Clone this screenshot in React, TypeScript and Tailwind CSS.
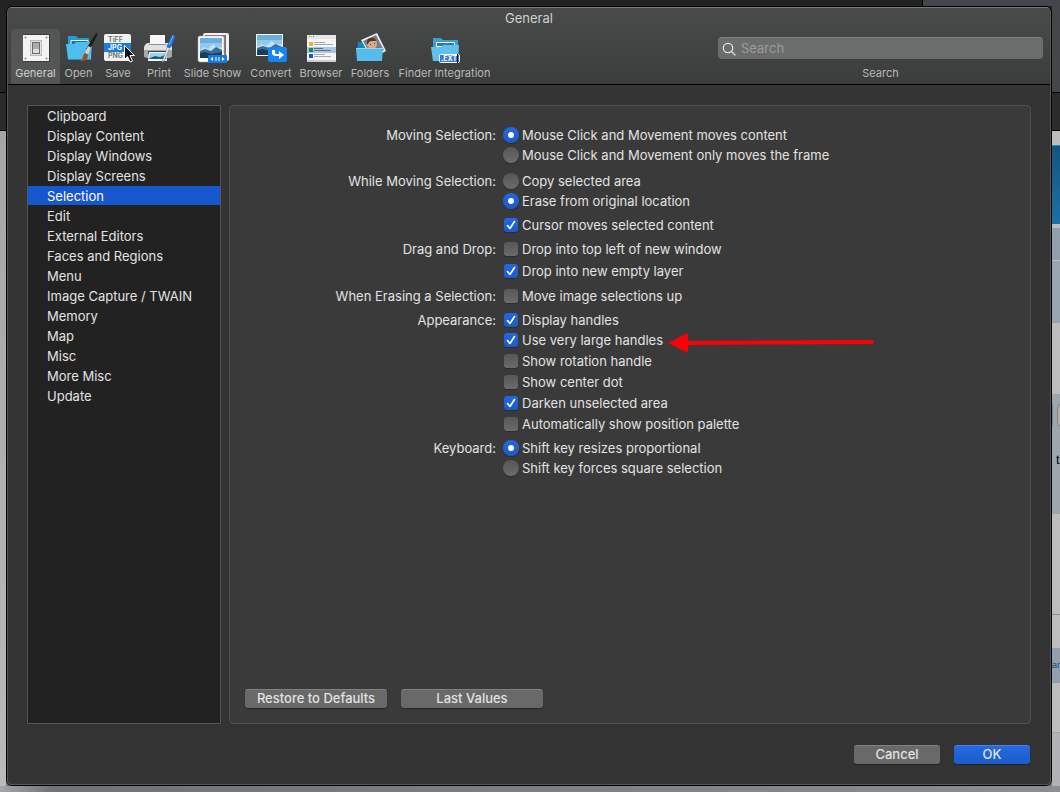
import type { ReactNode } from 'react'

const categories = [
  'Clipboard', 'Display Content', 'Display Windows', 'Display Screens', 'Selection',
  'Edit', 'External Editors', 'Faces and Regions', 'Menu', 'Image Capture / TWAIN',
  'Memory', 'Map', 'Misc', 'More Misc', 'Update',
]

function Svg({ children }: { children: ReactNode }) {
  return <svg width="32" height="32" viewBox="0 0 32 32" className="overflow-visible" aria-hidden="true">{children}</svg>
}

function GeneralIcon() {
  return (
    <Svg>
      <rect x="3" y="2" width="27" height="28" fill="#3a3a3a" />
      <rect x="3" y="3" width="26" height="26" fill="#f3f3f3" />
      <g fill="#888">
        <circle cx="5.5" cy="5.5" r="1" /><circle cx="26.5" cy="5.5" r="1" />
        <circle cx="5.5" cy="26.5" r="1" /><circle cx="26.5" cy="26.5" r="1" />
      </g>
      <rect x="10.5" y="8.500" width="11" height="15" fill="#e2e2e2" stroke="#bbb" />
      <rect x="12.500" y="10.500" width="7" height="11" fill="#d0d0d0" stroke="#6c6c6c" />
      <rect x="13" y="11" width="6" height="6" fill="#a9abad" />
      <rect x="13" y="17" width="6" height="4" fill="#dedede" />
    </Svg>
  )
}

function OpenIcon() {
  return (
    <Svg>
      <path d="M5 4h8l2 2h11v20H5z" fill="#239bd1" />
      <path d="M8 8.500h17v5H8z" fill="#1b6fb5" stroke="#e8f5ff" strokeWidth="1" />
      <path d="M3 12h8l2-2h16l-1 17a1 1 0 0 1-1 1H6a1 1 0 0 1-1-1z" fill="#4fbdee" />
      <path d="M5 27h22v1H5z" fill="#238fc4" />
      <path d="M33 1q2 0 1 3l-8 15-3-2z" fill="#1c1c1c" />
      <path d="m25 14 3 1.500-3 7-3-1.500z" fill="#cfd4d8" />
      <path d="m22 21 3 1.500q0 7-8 7 3-2 3-5 0-2 2-3.500z" fill="#a44b1e" />
    </Svg>
  )
}

function SaveIcon() {
  return (
    <Svg>
      <rect x="2" y="2" width="27" height="27" rx="2" fill="#f1f1f1" />
      <rect x="2" y="11" width="27" height="9" fill="#1c7ce0" />
      <g fontFamily="Inter, sans-serif" fontSize="7" fontWeight="700">
        <text x="6" y="10" fill="#7b7b7b">TiFF</text>
        <text x="6" y="18" fill="#fff">JPG</text>
        <text x="6" y="26" fill="#7b7b7b">PNG</text>
      </g>
      {/* mouse pointer */}
      <path d="M22.500 13.500v14l3-3 2.500 5.500 2.500-1-2.500-5.500h4.500z" fill="#111" stroke="#fff" />
    </Svg>
  )
}

function PrintIcon() {
  return (
    <Svg>
      <path d="M1 16q0-4 4-5h20q4 1 4 5v9l-3 1H4l-3-1z" fill="#a4a8ac" />
      <path d="M5 11h20q3 1 4 5v2H1v-2q1-4 4-5z" fill="#dfe1e3" />
      <path d="M7 3h15v9H7z" fill="#f7f7f7" />
      <path d="M6 12h17v1H6z" fill="#8e9194" />
      <path d="M5 19h19v3H5z" fill="#3b4044" />
      <path d="M6 20h17l1 9H5z" fill="#f5f5f5" />
      <path d="M7 21h15l1 6H6z" fill="#9bd3f0" />
      <path d="m7 26 5-2 5 1 5-2 1 4H6z" fill="#1e5c86" />
      <path d="m25 14-5 13-1 3 2-1 6-14z" fill="#e8edf0" stroke="#777" strokeWidth=".5" />
      <path d="M29 3q4-1 3 3l-4 9q-2 2-4 0-1-2 1-3z" fill="#1f74d8" />
      <path d="m30 4-4 9" stroke="#71b4fb" />
    </Svg>
  )
}

// mountain photo used by several icons
function Photo() {
  return (
    <>
      <path d="M0 0h22v20H0z" fill="#91c8ec" />
      <path d="M0 0h22v5H0z" fill="#6bafe0" />
      <path d="M0 12 4 9l4 2 5-5 4 4 5-1v6H0z" fill="#c9dfec" />
      <path d="m0 13 5-2 6 2 5-4 6 3v8H0z" fill="#3a6f94" />
      <path d="m0 15 5-1 6 2 11-2v6H0z" fill="#173e5c" />
    </>
  )
}

function SlideShowIcon() {
  return (
    <Svg>
      <rect x="6" y="1" width="26" height="28" rx="2" fill="#f1f1f1" />
      <path d="M8 3h21v23H8z" fill="#876a77" />
      <rect x="1" y="4" width="26" height="26" rx="2" fill="#f9f9f9" stroke="#aaa" strokeWidth=".5" />
      <g transform="translate(3 6)"><Photo /></g>
      <rect x="11" y="23" width="19" height="8" rx="1" fill="#1679e8" />
      <path d="m16 25-2.500 2 2.500 2zM25 25l2.500 2-2.500 2zM18.500 25h1v4h-1zM21.500 25h1v4h-1z" fill="#fff" />
    </Svg>
  )
}

function ConvertIcon() {
  return (
    <Svg>
      <path d="M1 2h27v22H1z" fill="#f6f6f6" />
      <g transform="translate(2 3) scale(1.14 1)"><Photo /></g>
      <rect x="13" y="15" width="19" height="15" rx="2" fill="#1685f4" />
      <path d="M17 18h3v3q0 1 2 1h2v-3l5 4-5 4v-3h-3q-4 0-4-3z" fill="#fff" />
    </Svg>
  )
}

function BrowserIcon() {
  return (
    <Svg>
      <path d="M2 3h29v27H2z" fill="#f5f5f5" />
      <path d="M2 3h29v4H2z" fill="#e5e5e5" />
      <path d="M4 4h1v1H4z" fill="#ed5b50" /><path d="M6 4h1v1H6z" fill="#d7b33c" /><path d="M8 4h1v1H8z" fill="#339c45" />
      <path d="M2 15h29v6H2z" fill="#abc6e0" />
      <path d="M4 10h4v4H4z" fill="#f0ac3c" />
      <path d="M4 16h4v4H4z" fill="#158759" />
      <path d="M4 22h4v4H4z" fill="#1c57bd" />
      <path d="M9 10h11v1H9zM9 12h19v1H9zM9 22h11v1H9zM9 24h17v1H9z" fill="#aaa" />
      <path d="M9 16h9v1H9zM9 18h17v1H9z" fill="#597185" />
      <path d="M2 28h29v2H2z" fill="#ccc" />
    </Svg>
  )
}

function FoldersIcon() {
  return (
    <Svg>
      <path d="M4 10h4l2 3h15v6H3z" fill="#1685b8" />
      <path d="m7 8 16-7 9 18-14 8z" fill="#f2f2f2" />
      <path d="m9 9 13-6 8 15-12 7z" fill="#73808a" />
      <circle cx="18" cy="12" r="5" fill="#dba98a" />
      <path d="M13 12q-1-6 4-6 4-1 5 3l-4 0q-3 0-4 3z" fill="#5a3424" />
      <path d="M16 12.500h1m3-1h1" stroke="#543" />
      <path d="M2 16h27l-1 13H3z" fill="#55bceb" />
      <path d="M2 16h27v1H2z" fill="#8ddafb" />
    </Svg>
  )
}

function FinderIcon() {
  return (
    <Svg>
      <path d="M4 6h8l2 2h15v19H4z" fill="#3d9fd0" />
      <path d="M7.500 10.500h18v4h-18z" fill="#2879b5" stroke="#edf8ff" />
      <path d="M2 15h10l2-2h16l-1 16H4z" fill="#62c0ed" />
      <rect x="10.500" y="22.500" width="20" height="8" rx="1" fill="#3478d8" stroke="#fff" />
      <text x="12" y="29" fill="#fff" fontFamily="Inter, sans-serif" fontSize="7" fontWeight="700">.EXT</text>
      <path d="M28 22h1v9h-1z" fill="#111" />
    </Svg>
  )
}

const tools = [
  { label: 'General', icon: <GeneralIcon />, width: 'w-[49px]' },
  { label: 'Open', icon: <OpenIcon />, width: 'w-[37px]' },
  { label: 'Save', icon: <SaveIcon />, width: 'w-[42px]' },
  { label: 'Print', icon: <PrintIcon />, width: 'w-[40px]' },
  { label: 'Slide Show', icon: <SlideShowIcon />, width: 'w-[67px]' },
  { label: 'Convert', icon: <ConvertIcon />, width: 'w-[50px]' },
  { label: 'Browser', icon: <BrowserIcon />, width: 'w-[50px]' },
  { label: 'Folders', icon: <FoldersIcon />, width: 'w-[48px]' },
  { label: 'Finder Integration', icon: <FinderIcon />, width: 'w-[101px]' },
]

interface OptionProps {
  label: string
  type?: 'checkbox' | 'radio'
  name?: string
  checked?: boolean
  className?: string
  children?: ReactNode
}

function Option({ label, type = 'checkbox', name, checked, className = '', children }: OptionProps) {
  const shape = type === 'radio'
    ? 'size-4 rounded-full'
    : 'size-3.5 rounded-[3px]'
  return (
    <div className={`relative h-5 ${className}`}>
      <label className="flex items-center gap-[3px] leading-5 whitespace-nowrap">
        <span className="grid size-4 place-items-center">
          <input
            type={type}
            name={name}
            defaultChecked={checked}
            className={`peer col-start-1 row-start-1 appearance-none bg-linear-to-b from-[#575757] to-[#6b6b6b] shadow-[0_1px_1px_rgba(0,0,0,0.25)] checked:from-[#2368df] checked:to-[#1c5ac8] ${shape}`}
          />
          {type === 'radio' ? (
            <span className="pointer-events-none col-start-1 row-start-1 hidden size-1.5 rounded-full bg-white peer-checked:block" />
          ) : (
            <svg width="14" height="14" viewBox="0 0 14 14" className="pointer-events-none col-start-1 row-start-1 hidden peer-checked:block">
              <path d="m3.500 7.500 2.500 3 4.500-7" fill="none" stroke="#fff" strokeWidth="1.600" strokeLinecap="round" strokeLinejoin="round" />
            </svg>
          )}
        </span>
        {label}
      </label>
      {children}
    </div>
  )
}

function Group({ title, className = '', children }: { title: string; className?: string; children: ReactNode }) {
  return (
    <div role="group" aria-label={title} className={`flex gap-[7px] ${className}`}>
      <span className="w-[266px] shrink-0 text-right leading-5">{title}</span>
      <div>{children}</div>
    </div>
  )
}

function Button({ primary, className, children }: { primary?: boolean; className: string; children: ReactNode }) {
  const tone = primary
    ? 'bg-linear-to-b from-[#266ae2] to-[#1d5ac8] border-t-[#4a83e8]'
    : 'bg-[#696969] border-t-[#808080]'
  return (
    <button type="button" className={`flex h-[19px] items-center justify-center rounded-[3px] border-t font-medium shadow-[0_1px_1px_rgba(0,0,0,0.35)] ${tone} ${className}`}>
      {children}
    </button>
  )
}

// slice of the desktop left of the window
function LeftStrip() {
  return (
    <div className="flex w-1.5 shrink-0 flex-col">
      <div className="h-[86px] bg-[#242424]" />
      <div className="h-[39px] border-t border-b border-t-black border-b-black bg-[#2b2b2b]" />
      <div className="flex-1 bg-linear-to-b from-[#a4a5a7] to-[#b9babc]" />
    </div>
  )
}

// slice of the web page right of the window
function RightStrip() {
  return (
    <div className="flex w-2 shrink-0 flex-col overflow-hidden bg-[#bdbdbd]">
      <div className="h-[86px] bg-[#43474a]" />
      <div className="h-[39px] border-t border-b border-black bg-[#2b2b2b]" />
      <div className="h-3.5" />
      <div className="h-[79px] border-t border-[#2f89ae] bg-linear-to-b from-[#135580] to-[#1c70a5]" />
      <div className="mt-1 h-8 bg-[#929eac]" />
      <div className="mt-px h-[62px] bg-[#98a4b0]" />
      <div className="h-[71px]" />
      <div className="h-[120px] bg-[#9ca6ab] pt-2.5">
        <div className="flex gap-1">
          <span className="h-[23px] w-0.5 rounded-r-sm border border-l-0 border-[#858585]" />
          <span className="h-[23px] w-3 shrink-0 rounded-sm border border-[#858585] bg-[#b0b0b0]" />
        </div>
        <div className="mt-[23px] pl-1 font-['Liberation_Sans',sans-serif] text-[13px] leading-5 text-black">t</div>
      </div>
      <div className="h-[100px]" />
      <div className="h-[34px] border-t border-[#8d8d8d]" />
      <div className="h-[35px] bg-[#929eaa] font-['Liberation_Sans',sans-serif] text-[9px] leading-[35px] text-[#1d4a70]">ar</div>
      <div className="h-[49px]" />
      <div className="flex-1 border-t border-[#a4a4a8] bg-[#b2b2b5]" />
    </div>
  )
}

export default function App() {
  return (
    <div className="flex min-h-screen flex-col bg-linear-to-b from-[#222222] to-[#6f7173] font-[Inter,'Liberation_Sans',sans-serif] text-[13px] text-[#e2e2e2]">
      <div className="flex h-1.5">
        <div className="flex-1 border-r border-black bg-[#222222]" />
        <div className="w-[137px] bg-[#43464a]" />
      </div>

      <div className="flex flex-1">
        <LeftStrip />

        <main className="flex min-w-0 flex-1 flex-col rounded-md border border-black">
          <div className="flex flex-1 flex-col overflow-hidden rounded-[5px] border border-[#555555] border-t-[#787979] bg-[#333333]">
            {/* title bar + toolbar */}
            <header className="border-b border-black bg-linear-to-b from-[#494b4a] to-[#3b3d3c]">
              <h1 className="h-[21px] text-center leading-[21px] text-[#cfcfcf]">General</h1>
              <div className="flex justify-between pr-[7px] pl-[3px]">
                <nav className="flex text-[11px] text-[#b8b8b8]">
                  {tools.map((tool, i) => (
                    <button
                      key={tool.label}
                      type="button"
                      className={`flex h-[55px] shrink-0 flex-col items-center rounded-t-sm pt-[3px] whitespace-nowrap ${tool.width} ${i === 0 ? 'bg-[#545655] text-[#d0d0d0]' : ''}`}
                    >
                      {tool.icon}
                      <span className="leading-[18px]">{tool.label}</span>
                    </button>
                  ))}
                </nav>
                <div className="w-[325px] pt-2">
                  <div className="flex h-[22px] items-center gap-[5px] rounded-[4px] border-t border-[#808281] bg-[#6b6d6c] px-1">
                    <svg width="14" height="14" viewBox="0 0 14 14" fill="none" stroke="#e0e0e0" strokeWidth="1.300" strokeLinecap="round" aria-hidden="true">
                      <circle cx="6" cy="6" r="4.700" />
                      <path d="m9.500 9.500 3.500 3.500" />
                    </svg>
                    <input
                      id="search"
                      type="search"
                      placeholder="Search"
                      className="min-w-0 flex-1 bg-transparent outline-none placeholder:text-[#9b9b9b]"
                    />
                  </div>
                  <label htmlFor="search" className="mt-[5px] block text-center text-[11px] leading-[18px] text-[#b8b8b8]">Search</label>
                </div>
              </div>
            </header>

            <div className="flex flex-1 gap-2 px-[19px] pt-5">
              <ul className="w-[194px] shrink-0 border border-[#555555] bg-[#222222]">
                {categories.map(name => (
                  <li key={name} className="h-5">
                    <button
                      type="button"
                      className={`block h-[19px] w-full pl-[19px] text-left leading-5 ${name === 'Selection' ? 'bg-[#1657ce] text-white' : ''}`}
                    >
                      {name}
                    </button>
                  </li>
                ))}
              </ul>

              <section className="flex min-w-0 flex-1 flex-col rounded-[4px] border border-[#505050] bg-[#3a3a3a] pt-[19px] pb-[15px]">
                <Group title="Moving Selection:">
                  <Option type="radio" name="moving" label="Mouse Click and Movement moves content" checked />
                  <Option type="radio" name="moving" label="Mouse Click and Movement only moves the frame" />
                </Group>
                <Group title="While Moving Selection:" className="mt-1.5">
                  <Option type="radio" name="while-moving" label="Copy selected area" />
                  <Option type="radio" name="while-moving" label="Erase from original location" checked />
                  <Option label="Cursor moves selected content" checked className="mt-1" />
                </Group>
                <Group title="Drag and Drop:" className="mt-1">
                  <Option label="Drop into top left of new window" />
                  <Option label="Drop into new empty layer" checked className="mt-0.5" />
                </Group>
                <Group title="When Erasing a Selection:" className="mt-[5px]">
                  <Option label="Move image selections up" />
                </Group>
                <Group title="Appearance:" className="mt-1">
                  <Option label="Display handles" checked />
                  <Option label="Use very large handles" checked>
                    {/* red callout arrow */}
                    <svg width="208" height="20" viewBox="0 0 208 20" className="absolute top-[3px] left-[165px]" aria-hidden="true">
                      <path d="M16 10 204 9" stroke="#fb0007" strokeWidth="4" strokeLinecap="round" />
                      <path d="M0 10 20 0v20z" fill="#fb0007" />
                    </svg>
                  </Option>
                  <Option label="Show rotation handle" className="mt-px" />
                  <Option label="Show center dot" className="mt-px" />
                  <Option label="Darken unselected area" checked className="mt-px" />
                  <Option label="Automatically show position palette" className="mt-px" />
                </Group>
                <Group title="Keyboard:" className="mt-1">
                  <Option type="radio" name="keyboard" label="Shift key resizes proportional" checked />
                  <Option type="radio" name="keyboard" label="Shift key forces square selection" />
                </Group>

                <div className="mt-auto flex gap-3.5 pl-[15px]">
                  <Button className="w-[142px]">Restore to Defaults</Button>
                  <Button className="w-[142px]">Last Values</Button>
                </div>
              </section>
            </div>

            <footer className="flex justify-end gap-3.5 px-5 pt-[21px] pb-5">
              <Button className="w-[86px]">Cancel</Button>
              <Button primary className="w-[76px]">OK</Button>
            </footer>
          </div>
        </main>

        <RightStrip />
      </div>

      <div className="h-1.5 bg-linear-to-r from-[#a5a6a8] via-[#707274] via-5% to-[#8b8d8f]" />
    </div>
  )
}
